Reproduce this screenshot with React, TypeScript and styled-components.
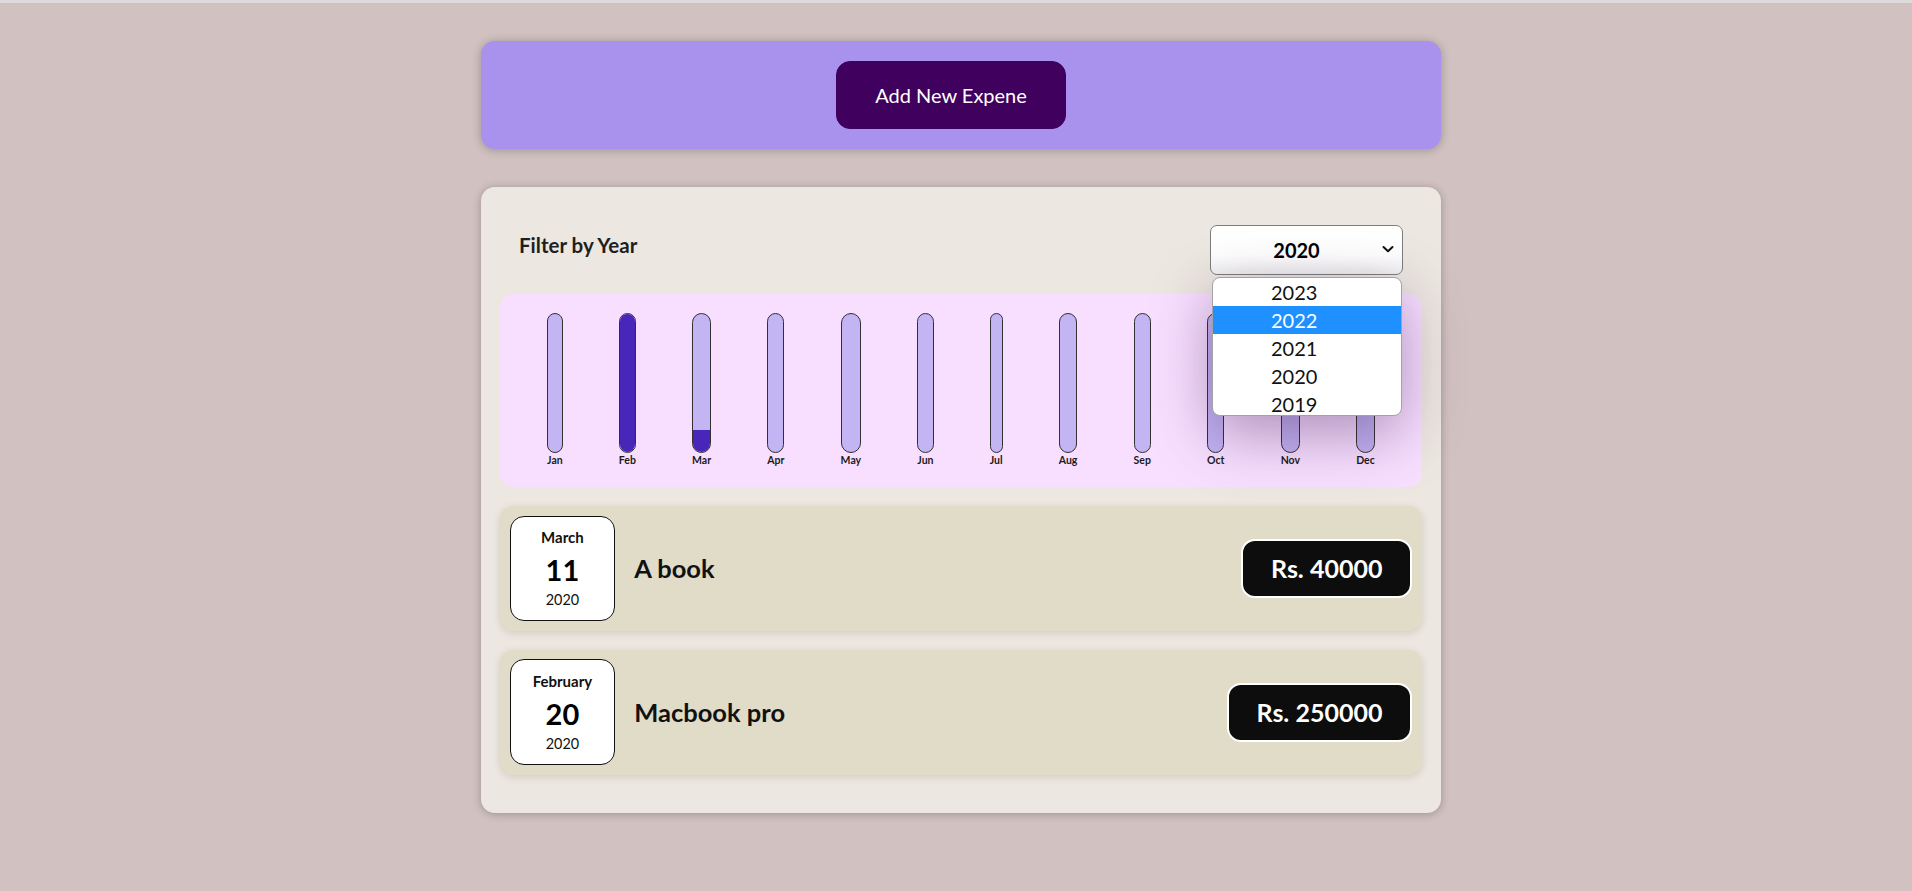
import React, { useState } from "react"
import styled, { createGlobalStyle } from "styled-components"

interface Expense {
  id: string
  title: string
  amount: number
  date: Date
}

const GlobalStyle = createGlobalStyle`
  * {
    box-sizing: border-box;
  }

  html {
    border-top: 3px solid #dcdada;
  }

  body {
    margin: 0;
    padding-left: 10px;
    background-color: #d1c1c1;
    font-family: Lato, "Noto Sans", sans-serif;
  }
`

const NewExpenseCard = styled.div`
  width: 960px;
  max-width: 95%;
  margin: 38px auto;
  padding: 20px;
  border-radius: 14px;
  background-color: #a892ee;
  text-align: center;
  box-shadow: 0 1px 10px rgba(0, 0, 0, 0.25);
`

const AddButton = styled.button`
  font: inherit;
  font-size: 20px;
  line-height: 28px;
  padding: 19px 38px;
  margin-right: 20px;
  border: 1px solid #40005d;
  border-radius: 14px;
  background-color: #40005d;
  color: #fff;
  cursor: pointer;
`

const ExpensesCard = styled.div`
  width: 960px;
  max-width: 95%;
  margin: 38px auto;
  padding: 19px;
  border-radius: 14px;
  background-color: #ece7e0;
  box-shadow: 0 1px 8px rgba(0, 0, 0, 0.25);
`

const Filter = styled.div`
  padding: 0 19px;
`

const FilterControl = styled.div`
  display: flex;
  width: 100%;
  align-items: center;
  justify-content: space-between;
  margin: 19px 0;
`

const FilterLabel = styled.label`
  font-weight: bold;
  font-size: 20.5px;
  color: #1f1f1f;
  margin-bottom: 10px;
`

const SelectWrap = styled.div`
  position: relative;
  width: 193px;
  height: 50px;
`

const YearSelect = styled.select`
  appearance: none;
  width: 100%;
  height: 100%;
  font: inherit;
  font-size: 20px;
  font-weight: bold;
  color: #000;
  text-align: center;
  padding: 0 40px 0 20px;
  border: 1px solid #7d7d7d;
  border-radius: 7px;
  background: linear-gradient(#ffffff 60%, #f0f0f0);
`

const Chevron = styled.svg`
  position: absolute;
  right: 8px;
  top: 19px;
  pointer-events: none;
`

const Dropdown = styled.ul`
  position: absolute;
  top: calc(100% + 2px);
  left: 2px;
  right: 1px;
  height: 139px;
  margin: 0;
  padding: 0;
  list-style: none;
  overflow: hidden;
  background-color: #fff;
  border: 1.5px solid #a3a3a3;
  border-radius: 8px;
  box-shadow: 0 18px 60px rgba(60, 25, 80, 0.4);
  z-index: 2;
`

const DropdownOption = styled.li<{ $active?: boolean }>`
  height: 28px;
  line-height: 28px;
  padding-left: 58px;
  font-size: 20px;
  color: ${(p) => (p.$active ? "#fff" : "#111")};
  background-color: ${(p) => (p.$active ? "#1e90ff" : "transparent")};
`

const Chart = styled.div`
  display: flex;
  justify-content: space-around;
  height: 193px;
  padding: 19px;
  border-radius: 14px;
  background-color: #f8dfff;
  text-align: center;
`

const ChartBarColumn = styled.div`
  height: 100%;
  display: flex;
  flex-direction: column;
  align-items: center;
`

const ChartBarInner = styled.div`
  flex: 1;
  width: 100%;
  border: 1px solid #313131;
  border-radius: 14px;
  background-color: #c3b4f3;
  overflow: hidden;
  display: flex;
  flex-direction: column;
  justify-content: flex-end;
`

const ChartBarFill = styled.div`
  width: 100%;
  background-color: #4826b9;
`

const ChartBarLabel = styled.div`
  font-weight: bold;
  font-size: 10.5px;
  line-height: 15px;
  color: #1a1a1a;
`

const ExpenseList = styled.ul`
  list-style: none;
  margin: 0;
  padding: 0;
`

const ExpenseItem = styled.li`
  display: flex;
  justify-content: space-between;
  align-items: center;
  padding: 9.6px;
  margin: 19px 0;
  border-radius: 14px;
  background-color: #e0dcc8;
  box-shadow: 0 2px 8px rgba(0, 0, 0, 0.12);
`

const DateBox = styled.div`
  display: flex;
  flex-direction: column;
  align-items: center;
  justify-content: center;
  width: 105.6px;
  height: 105.6px;
  border: 1px solid #111;
  border-radius: 14px;
  background-color: #fff;
  color: #111;
`

const DateMonth = styled.div`
  font-size: 15px;
  line-height: 22px;
  font-weight: bold;
`

const DateDay = styled.div`
  margin-top: 3px;
  font-size: 29px;
  line-height: 38px;
  font-weight: bold;
  color: #000;
`

const DateYear = styled.div`
  font-size: 14.4px;
  line-height: 22px;
`

const Description = styled.div`
  display: flex;
  flex: 1;
  align-items: center;
  justify-content: flex-start;
`

const ExpenseTitle = styled.h2`
  flex: 1;
  margin: 0 19px;
  font-size: 25.5px;
  color: #111;
`

const Price = styled.div`
  font-size: 25px;
  line-height: 36px;
  font-weight: bold;
  color: #fff;
  background-color: #0d0d0d;
  border: 2.4px solid #fff;
  padding: 9.6px 28px;
  border-radius: 14px;
`

const MONTHS = ["Jan", "Feb", "Mar", "Apr", "May", "Jun", "Jul", "Aug", "Sep", "Oct", "Nov", "Dec"]
const YEARS = ["2023", "2022", "2021", "2020", "2019"]

const EXPENSES: Expense[] = [
  { id: "e1", title: "A book", amount: 40000, date: new Date(2020, 2, 11) },
  { id: "e2", title: "Macbook pro", amount: 250000, date: new Date(2020, 1, 20) },
]

const ExpenseDate: React.FC<{ date: Date }> = ({ date }) => (
  <DateBox>
    <DateMonth>{date.toLocaleString("en-US", { month: "long" })}</DateMonth>
    <DateDay>{date.getDate()}</DateDay>
    <DateYear>{date.getFullYear()}</DateYear>
  </DateBox>
)

const App: React.FC = () => {
  const [year, setYear] = useState("2020")

  const filtered = EXPENSES.filter((e) => e.date.getFullYear().toString() === year)
  const monthTotals = MONTHS.map((_, i) =>
    filtered.filter((e) => e.date.getMonth() === i).reduce((sum, e) => sum + e.amount, 0)
  )
  const maxValue = Math.max(...monthTotals)

  return (
    <>
      <GlobalStyle />
      <NewExpenseCard>
        <AddButton>Add New Expene</AddButton>
      </NewExpenseCard>
      <ExpensesCard>
        <Filter>
          <FilterControl>
            <FilterLabel>Filter by Year</FilterLabel>
            <SelectWrap>
              <YearSelect value={year} onChange={(e) => setYear(e.target.value)}>
                {YEARS.map((y) => (
                  <option key={y} value={y}>
                    {y}
                  </option>
                ))}
              </YearSelect>
              <Chevron width="14" height="10" viewBox="0 0 14 10">
                <path d="M2.5 3 L7 7.2 L11.5 3" fill="none" stroke="#111" strokeWidth="2" strokeLinecap="round" strokeLinejoin="round" />
              </Chevron>
              <Dropdown>
                {YEARS.map((y) => (
                  <DropdownOption key={y} $active={y === "2022"}>
                    {y}
                  </DropdownOption>
                ))}
              </Dropdown>
            </SelectWrap>
          </FilterControl>
        </Filter>
        <Chart>
          {MONTHS.map((m, i) => (
            <ChartBarColumn key={m}>
              <ChartBarInner>
                <ChartBarFill
                  style={{ height: maxValue > 0 ? `${Math.round((monthTotals[i] / maxValue) * 100)}%` : "0%" }}
                />
              </ChartBarInner>
              <ChartBarLabel>{m}</ChartBarLabel>
            </ChartBarColumn>
          ))}
        </Chart>
        <ExpenseList>
          {filtered.map((e) => (
            <ExpenseItem key={e.id}>
              <ExpenseDate date={e.date} />
              <Description>
                <ExpenseTitle>{e.title}</ExpenseTitle>
                <Price>Rs. {e.amount}</Price>
              </Description>
            </ExpenseItem>
          ))}
        </ExpenseList>
      </ExpensesCard>
    </>
  )
}

export default App
